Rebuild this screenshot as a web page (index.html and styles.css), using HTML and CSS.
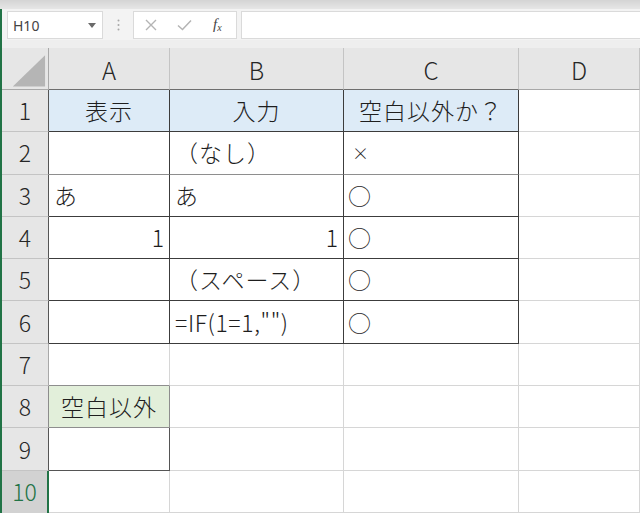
FILE: index.html
```html
<!DOCTYPE html>
<html lang="ja">
<head>
<meta charset="utf-8">
<title>Excel</title>
<link rel="stylesheet" href="styles.css">
</head>
<body>
<div class="topband"></div>
<div class="main">
  <div class="fbar">
    <div class="namebox">
      <span class="nbtext">H10</span>
      <svg class="caret" width="8" height="5" viewBox="0 0 8 5"><path d="M0 0H8L4 5Z" fill="#6a6a6a"/></svg>
    </div>
    <div class="dots">
      <svg width="3" height="12" viewBox="0 0 3 12"><circle cx="1.5" cy="1.5" r="1" fill="#a8a8a8"/><circle cx="1.5" cy="6" r="1" fill="#a8a8a8"/><circle cx="1.5" cy="10.5" r="1" fill="#a8a8a8"/></svg>
    </div>
    <div class="fxbox">
      <svg class="ic-x" width="12" height="12" viewBox="0 0 12 12"><path d="M1 1L11 11M11 1L1 11" stroke="#b4b4b4" stroke-width="1.4" fill="none"/></svg>
      <svg class="ic-ok" width="15" height="12" viewBox="0 0 15 12"><path d="M1 6.5L5.5 10.5L14 1.5" stroke="#b4b4b4" stroke-width="1.5" fill="none"/></svg>
      <span class="fx">f<sub>x</sub></span>
    </div>
    <div class="finput"></div>
  </div>
  <div class="strip"></div>
  <div class="grid">
    <div class="c corner"><svg width="47" height="42" viewBox="0 0 47 42"><path d="M11 39H44V7Z" fill="#b5b5b5"/></svg></div>
    <div class="c h tb">A</div>
    <div class="c h tb">B</div>
    <div class="c h tb">C</div>
    <div class="c h">D</div>

    <div class="c r tl">1</div>
    <div class="c blue ctr bd rd">表示</div>
    <div class="c blue ctr bd rd">入力</div>
    <div class="c blue ctr bd rd">空白以外か？</div>
    <div class="c"></div>

    <div class="c r tl">2</div>
    <div class="c bg rd"></div>
    <div class="c bg rd">（なし）</div>
    <div class="c bg rd"><span class="batsu">×</span></div>
    <div class="c"></div>

    <div class="c r tl">3</div>
    <div class="c bd rd">あ</div>
    <div class="c bd rd">あ</div>
    <div class="c bd rd"><span class="maru">○</span></div>
    <div class="c"></div>

    <div class="c r tl">4</div>
    <div class="c bd rd num">1</div>
    <div class="c bd rd num">1</div>
    <div class="c bd rd"><span class="maru">○</span></div>
    <div class="c"></div>

    <div class="c r tl">5</div>
    <div class="c bd rd"></div>
    <div class="c bd rd">（スペース）</div>
    <div class="c bd rd"><span class="maru">○</span></div>
    <div class="c"></div>

    <div class="c r tl">6</div>
    <div class="c bd rd"></div>
    <div class="c bd rd formula">=IF(1=1,"")</div>
    <div class="c bd rd"><span class="maru">○</span></div>
    <div class="c"></div>

    <div class="c r">7</div>
    <div class="c bg"></div>
    <div class="c"></div>
    <div class="c"></div>
    <div class="c"></div>

    <div class="c r tg">8</div>
    <div class="c green ctr bg rg">空白以外</div>
    <div class="c"></div>
    <div class="c"></div>
    <div class="c"></div>

    <div class="c r tl">9</div>
    <div class="c bd2 rd2"></div>
    <div class="c"></div>
    <div class="c"></div>
    <div class="c"></div>

    <div class="c r sel">10</div>
    <div class="c"></div>
    <div class="c"></div>
    <div class="c"></div>
    <div class="c"></div>
  </div>
</div>
</body>
</html>
```

FILE: styles.css
```css
html, body {
  margin: 0;
  padding: 0;
}
body {
  width: 640px;
  height: 513px;
  overflow: hidden;
  background: #f3f3f3;
  font-family: "Noto Sans CJK JP", "Noto Sans", sans-serif;
  color: #1e1e1e;
}
.topband {
  height: 9px;
  background: linear-gradient(#d4d4d4, #e6e6e6);
}
.main {
  border-left: 2px solid #217346;
  height: 504px;
  box-sizing: border-box;
}
.fbar {
  height: 31px;
  box-sizing: border-box;
  padding-top: 2px;
  display: flex;
  align-items: flex-start;
  background: #f3f3f3;
}
.namebox {
  margin-left: 5px;
  width: 96px;
  height: 28px;
  box-sizing: border-box;
  background: #fff;
  border: 1px solid #dadada;
  display: flex;
  align-items: center;
  padding-left: 5px;
  padding-right: 6px;
}
.nbtext {
  font-family: "Noto Sans", sans-serif;
  font-size: 14px;
  color: #444;
  flex: 1;
  padding-top: 1px;
}
.caret {
  display: block;
}
.dots {
  width: 30px;
  height: 28px;
  display: flex;
  align-items: center;
  justify-content: center;
}
.dots svg {
  display: block;
}
.fxbox {
  width: 104px;
  height: 28px;
  box-sizing: border-box;
  background: #fff;
  border: 1px solid #dadada;
  display: flex;
  align-items: center;
}
.ic-x {
  margin-left: 11px;
  display: block;
}
.ic-ok {
  margin-left: 20px;
  display: block;
}
.fx {
  margin-left: 21px;
  font-family: "Liberation Serif", serif;
  font-style: italic;
  font-size: 15px;
  color: #444;
  line-height: 1;
}
.fx sub {
  font-size: 10px;
  vertical-align: -2px;
}
.finput {
  margin-left: 4px;
  flex: 1;
  height: 28px;
  box-sizing: border-box;
  background: #fff;
  border: 1px solid #dadada;
  border-right: none;
}
.strip {
  height: 8px;
  background: #eeeeee;
}
.grid {
  display: grid;
  grid-template-columns: 47px 121px 174px 175px 121px;
  grid-template-rows: 42px repeat(10, 42.3px);
  background: #fff;
}
.c {
  box-sizing: border-box;
  border-right: 1px solid #d6d6d6;
  border-bottom: 1px solid #d6d6d6;
  display: flex;
  align-items: center;
  padding: 0 5px;
  font-size: 23px;
  font-weight: 300;
  letter-spacing: 1px;
  white-space: nowrap;
  overflow: hidden;
  line-height: 1;
}
.corner {
  background: #e6e6e6;
  padding: 0;
  border-right: 1px solid #a8a8a8;
  border-bottom: 1px solid #a8a8a8;
}
.corner svg {
  display: block;
}
.h {
  background: #e6e6e6;
  justify-content: center;
  font-size: 24px;
  letter-spacing: 0;
  color: #262626;
  border-right: 1px solid #c4c4c4;
  border-bottom: 1px solid #a8a8a8;
  padding-top: 2px;
}
.h.tb {
  border-bottom-color: #6e6e6e;
}
.r {
  background: #e6e6e6;
  justify-content: center;
  padding: 0;
  letter-spacing: 0;
  color: #262626;
  border-right: 1px solid #a8a8a8;
  border-bottom: 1px solid #c4c4c4;
}
.r.tl {
  border-right-color: #555;
}
.r.tg {
  border-right-color: #8c8c8c;
}
.r.sel {
  background: #d2d2d2;
  color: #217346;
  border-right: 2px solid #217346;
  border-bottom: none;
}
.blue {
  background: #ddebf7;
}
.green {
  background: #e2efda;
}
.ctr {
  justify-content: center;
}
.num {
  justify-content: flex-end;
  padding-right: 5px;
  letter-spacing: 0;
}
.formula {
  letter-spacing: 0.6px;
}
.bd {
  border-bottom-color: #3c3c3c;
}
.rd {
  border-right-color: #3c3c3c;
}
.bg {
  border-bottom-color: #8e8e8e;
}
.rg {
  border-right-color: #8e8e8e;
}
.bd2 {
  border-bottom-color: #555;
}
.rd2 {
  border-right-color: #555;
}
.maru {
  font-size: 23px;
  margin-left: -1px;
}
.batsu {
  font-size: 17px;
  margin-left: 3px;
}
```
